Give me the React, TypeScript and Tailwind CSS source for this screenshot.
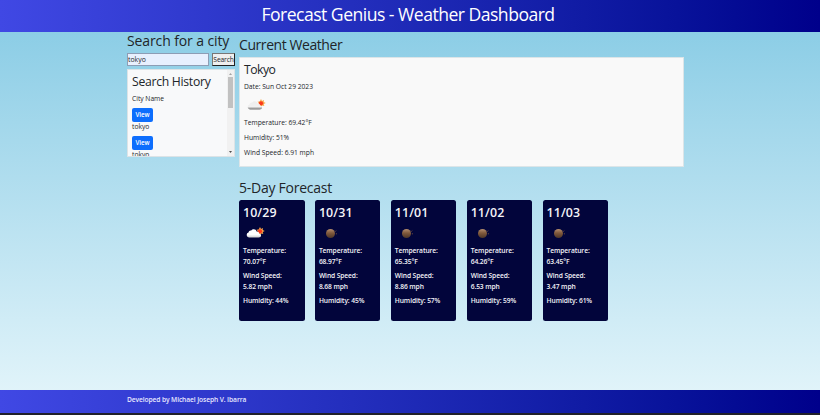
import React from "react";

const days = [
  { date: "10/29", temp: "70.07", wind: "5.82", humidity: 44, icon: "cloud" },
  { date: "10/31", temp: "68.97", wind: "8.68", humidity: 45, icon: "moon" },
  { date: "11/01", temp: "65.35", wind: "8.86", humidity: 57, icon: "moon" },
  { date: "11/02", temp: "64.26", wind: "6.53", humidity: 59, icon: "moon" },
  { date: "11/03", temp: "63.45", wind: "3.47", humidity: 61, icon: "moon" },
];

function CloudSun({ faded = false }: { faded?: boolean }) {
  const id = faded ? "cloud-faded" : "cloud-bright";
  return (
    <svg width="24" height="16" viewBox="0 0 24 16" className="block">
      <defs>
        <linearGradient id={id} x1="0" y1="0" x2="0" y2="1">
          <stop offset="0" stopColor={faded ? "#eeeeee" : "#ffffff"} />
          <stop offset="0.65" stopColor={faded ? "#f1f1f1" : "#ffffff"} />
          <stop offset="1" stopColor={faded ? "#707070" : "#cfcfcf"} />
        </linearGradient>
      </defs>
      <path d="M17 2l1 2 2-1-.3 2 2 1-2 1 .6 2-2-.6-1.300 1.600-1-2-2 .2 1-1.900-1.500-1.500 2.200-.3z" fill="#f8a848" />
      <circle cx="17" cy="6.300" r="2.100" fill="#fb3a1c" />
      <path d="M6 12.500a2.500 2.500 0 0 1-.5-4.900c.3-1.600 1.500-2.400 2.700-2 1.400-2.100 4.800-1.600 5.400.8 1.900-.2 2.600 1.200 2.400 2.200 2.900.2 2.700 3.900-.4 3.900z" fill={`url(#${id})`} />
    </svg>
  );
}

function Moon() {
  return (
    <svg width="24" height="16" viewBox="0 0 24 16" className="block">
      <defs>
        <linearGradient id="moon-fill" x1="0" y1="0" x2="0" y2="1">
          <stop offset="0" stopColor="#b58e6e" />
          <stop offset="0.45" stopColor="#80593c" />
          <stop offset="1" stopColor="#4d3628" />
        </linearGradient>
      </defs>
      <circle cx="11.500" cy="8.500" r="4.500" fill="url(#moon-fill)" />
      <path d="M16.300 6.500l1-.9M16.800 8.800h1.200" stroke="#65483f" strokeWidth="1" />
    </svg>
  );
}

function ForecastCard({ day }: { day: (typeof days)[number] }) {
  return (
    <article className="h-[121px] w-[65.500px] rounded-[2.500px] bg-[#02053b] pl-[4px] pt-[4px] font-semibold text-[#f4f4f8]">
      <h3 className="h-[16px] text-[12.400px] leading-[17px] tracking-[0.100px]">{day.date}</h3>
      <div className="mt-[5px] h-[16px]">{day.icon === "cloud" ? <CloudSun /> : <Moon />}</div>
      <div className="mt-[5px] text-[6.700px] leading-[10.500px] tracking-[-0.100px]">
        <p>Temperature:<br />{day.temp}°F</p>
        <p className="mt-[4px]">Wind Speed:<br />{day.wind} mph</p>
        <p className="mt-[4px]">Humidity: {day.humidity}%</p>
      </div>
    </article>
  );
}

function HistoryItem() {
  return (
    <div>
      <button className="block h-[14px] w-[21px] rounded-[2px] bg-[#0d6efd] text-center text-[6.200px] font-semibold leading-[14px] tracking-[-0.100px] text-white">View</button>
      <p className="h-[14px] text-[6.700px] leading-[10px]">tokyo</p>
    </div>
  );
}

export default function App() {
  return (
    <div className="flex h-[415px] w-[820px] flex-col overflow-hidden bg-linear-to-b from-[#84cae4] to-[#e6f6fb] font-['Open_Sans','Noto_Sans',sans-serif] text-[#212529]">
      <header className="h-[32px] shrink-0 bg-linear-to-r from-[#4048e4] to-[#00008b] pr-[4px] text-center text-white">
        <h1 className="text-[17.600px] leading-[29px] tracking-[-0.520px]">Forecast Genius - Weather Dashboard</h1>
      </header>

      <main className="flex h-[358px] shrink-0 pl-[127px]">
        <aside className="w-[108px] shrink-0">
          <h2 className="h-[21px] whitespace-nowrap text-[14px] leading-[17px] tracking-[-0.110px]">Search for a city</h2>
          <div className="flex justify-between">
            <input defaultValue="tokyo" className="block h-[13px] w-[82px] border border-[#8d9db5] bg-[#e8f0fe] p-0 text-[6.900px] leading-[11px] outline-none" />
            <button className="h-[13px] w-[23px] border border-t-[#777] border-l-[#777] border-r-[#222] border-b-[#222] bg-[#efefef] text-[6.700px] leading-[10px] tracking-[-0.150px]">Search</button>
          </div>
          <section className="mt-[3px] flex h-[88px] overflow-hidden border border-[#dce3e6] bg-[#f8f9fa]">
            <div className="flex-1 pl-[4px] pt-[3px]">
              <h2 className="h-[18px] whitespace-nowrap text-[12.200px] leading-[17px] tracking-[-0.280px]">Search History</h2>
              <p className="mb-[4px] mt-[3px] text-[6.700px] leading-[10px]">City Name</p>
              <HistoryItem />
              <HistoryItem />
            </div>
            <div className="flex w-[7px] flex-col items-center justify-between bg-[#f1f1f1] py-[2px]">
              <svg width="5" height="4" viewBox="0 0 5 4"><path d="M1 3l1.500-2L4 3z" fill="#a3a3a3" /></svg>
              <div className="mb-auto mt-[1px] h-[31px] w-[5px] bg-[#c1c1c1]" />
              <svg width="5" height="4" viewBox="0 0 5 4"><path d="M1 1l1.500 2L4 1z" fill="#505050" /></svg>
            </div>
          </section>
        </aside>

        <div className="ml-[4px] w-[445px]">
          <h2 className="h-[25px] pt-[3px] text-[14px] leading-[20px] tracking-[-0.430px]">Current Weather</h2>
          <section className="h-[110px] border border-[#dce5e8] bg-[#f9f9f9] pl-[4px] pt-[3px]">
            <h3 className="h-[18px] text-[12.200px] leading-[17px] tracking-[-0.500px]">Tokyo</h3>
            <div className="text-[6.700px] leading-[10px]">
              <p className="mt-[3px]">Date: Sun Oct 29 2023</p>
              <div className="mt-[5px] h-[16px]"><CloudSun faded /></div>
              <p className="mt-[5px]">Temperature: 69.42°F</p>
              <p className="mt-[5px]">Humidity: 51%</p>
              <p className="mt-[5px]">Wind Speed: 6.91 mph</p>
            </div>
          </section>
          <h2 className="mt-[11px] h-[22px] text-[14px] leading-[20px] tracking-[-0.250px]">5-Day Forecast</h2>
          <section className="flex gap-[10.400px]">
            {days.map((day) => <ForecastCard key={day.date} day={day} />)}
          </section>
        </div>
      </main>

      <footer className="h-[23px] shrink-0 bg-linear-to-r from-[#4048e4] to-[#00008b] pl-[127px] text-[6.700px] font-semibold leading-[19px] tracking-[-0.110px] text-[#e8e8ff]">Developed by Michael Joseph V. Ibarra</footer>
      <div className="h-[2px] shrink-0 bg-[#20202a]" />
    </div>
  );
}
